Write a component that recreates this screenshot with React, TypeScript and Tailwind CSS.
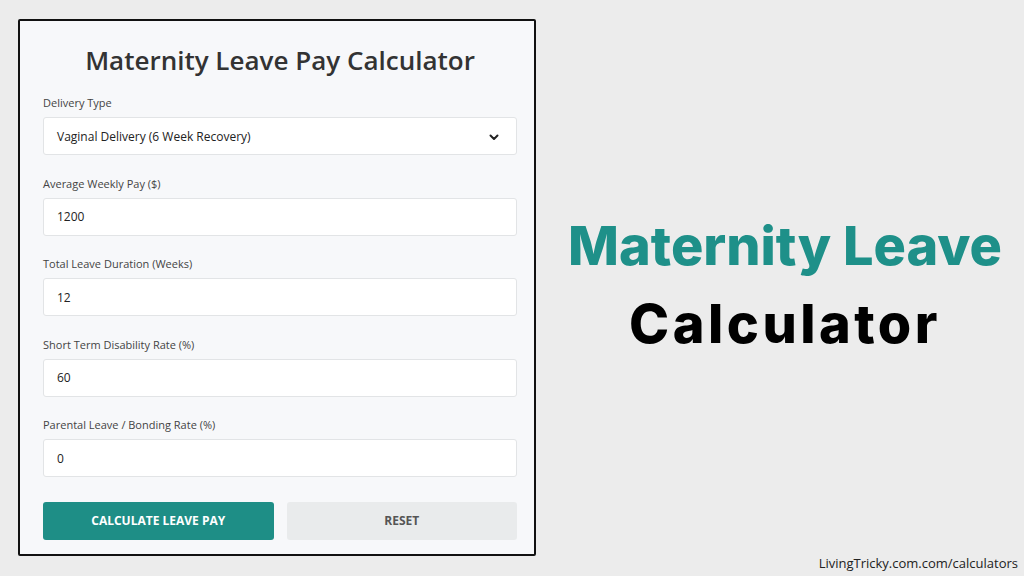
import React from "react";

const fields = [
  { label: "Average Weekly Pay ($)", value: "1200" },
  { label: "Total Leave Duration (Weeks)", value: "12" },
  { label: "Short Term Disability Rate (%)", value: "60" },
  { label: "Parental Leave / Bonding Rate (%)", value: "0" },
];

export default function App() {
  return (
    <div className="w-[1024px] h-[576px] bg-[#ececec] flex overflow-hidden" style={{ fontFamily: '"Open Sans", "Noto Sans", sans-serif' }}>
      <div className="ml-[18px] mt-[19px] w-[518px] h-[537px] border-2 border-[#111] rounded-[2px] bg-[#f7f8fa] pl-[23px] pr-[17px] pt-[19px] shrink-0">
        <h1 className="h-[40px] leading-[40px] text-center text-[26px] font-semibold text-[#333] mb-[13px]">
          Maternity Leave Pay Calculator
        </h1>
        <div className="h-[20px] leading-[20px] text-[11px] text-[#444] mb-[4px]">Delivery Type</div>
        <div className="h-[38px] rounded-[3px] border border-[#e2e4e6] bg-white flex items-center justify-between pl-[13px] pr-[16px] pt-[1px] mb-[18.5px]">
          <span className="text-[12px] text-[#222]">Vaginal Delivery (6 Week Recovery)</span>
          <svg width="12" height="12" viewBox="0 0 12 12" fill="none">
            <path d="M2.5 4.5 L6 8 L9.5 4.5" stroke="#222" strokeWidth="2" strokeLinecap="round" strokeLinejoin="round" />
          </svg>
        </div>
        {fields.map((f) => (
          <div key={f.label}>
            <div className="h-[20px] leading-[20px] text-[11px] text-[#444] mb-[4px]">{f.label}</div>
            <div className="h-[38px] rounded-[3px] border border-[#e2e4e6] bg-white flex items-center pl-[13px] pt-[1px] mb-[18.5px]">
              <span className="text-[12px] text-[#222]">{f.value}</span>
            </div>
          </div>
        ))}
        <div className="grid grid-cols-2 gap-[13px] mt-[25px]">
          <div className="h-[38px] rounded-[3px] bg-[#1e8e86] flex items-center justify-center text-white text-[12px] font-bold">
            CALCULATE LEAVE PAY
          </div>
          <div className="h-[38px] rounded-[3px] bg-[#e9ebec] flex items-center justify-center text-[#555] text-[12px] font-bold">
            RESET
          </div>
        </div>
      </div>
      <div className="flex-1 flex flex-col">
        <div className="flex-1 flex flex-col items-center justify-center pt-[16px] pl-[10px]">
          <div className="text-[54px] leading-[78px] font-extrabold text-[#1e9089]" style={{ fontFamily: 'Inter, sans-serif' }}>
            Maternity Leave
          </div>
          <div className="text-[54px] leading-[78px] font-extrabold text-black tracking-[3.5px]" style={{ fontFamily: 'Inter, sans-serif' }}>
            Calculator
          </div>
        </div>
        <div className="text-right pr-[6px] pb-[4px] text-[13px] text-[#222] leading-[18px]">
          LivingTricky.com.com/calculators
        </div>
      </div>
    </div>
  );
}
